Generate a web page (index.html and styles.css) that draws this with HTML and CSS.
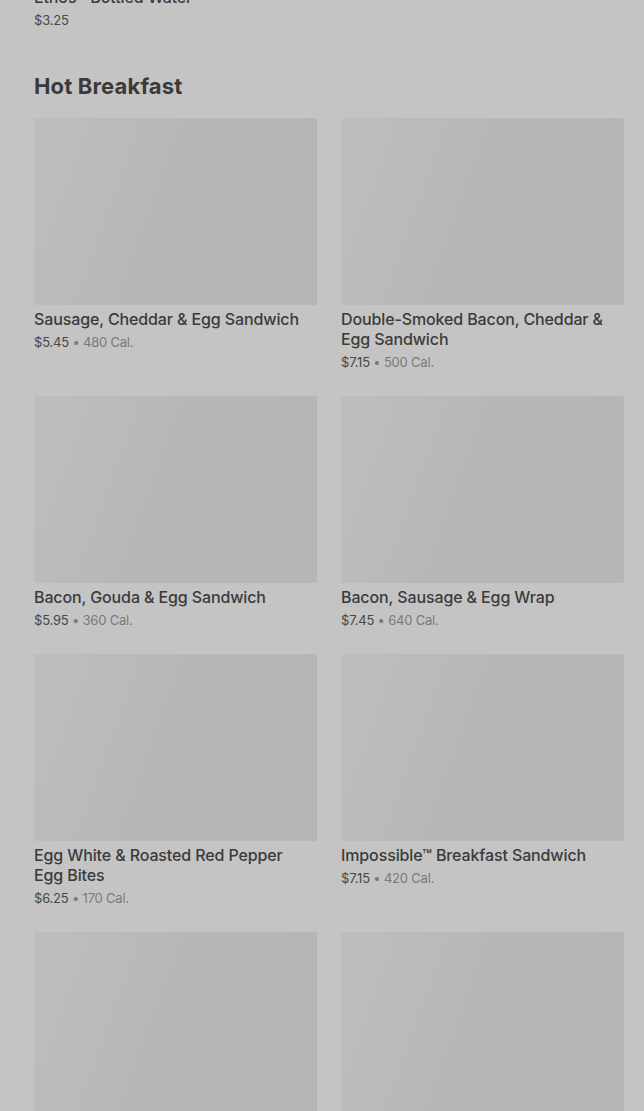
FILE: index.html
```html
<!DOCTYPE html>
<html lang="en">
<head>
<meta charset="utf-8">
<title>Menu</title>
<link rel="stylesheet" href="styles.css">
</head>
<body>
<main class="page">
  <div class="prev-item">
    <div class="item-name">Ethos™ Bottled Water</div>
    <div class="item-meta"><span class="price">$3.25</span></div>
  </div>

  <section class="category">
    <h2 class="category-title">Hot Breakfast</h2>
    <div class="grid">
      <article class="card">
        <div class="thumb"></div>
        <div class="item-name">Sausage, Cheddar &amp; Egg Sandwich</div>
        <div class="item-meta"><span class="price">$5.45</span><span class="cal"> • 480 Cal.</span></div>
      </article>
      <article class="card">
        <div class="thumb"></div>
        <div class="item-name">Double-Smoked Bacon, Cheddar &amp; Egg Sandwich</div>
        <div class="item-meta"><span class="price">$7.15</span><span class="cal"> • 500 Cal.</span></div>
      </article>
      <article class="card">
        <div class="thumb"></div>
        <div class="item-name">Bacon, Gouda &amp; Egg Sandwich</div>
        <div class="item-meta"><span class="price">$5.95</span><span class="cal"> • 360 Cal.</span></div>
      </article>
      <article class="card">
        <div class="thumb"></div>
        <div class="item-name">Bacon, Sausage &amp; Egg Wrap</div>
        <div class="item-meta"><span class="price">$7.45</span><span class="cal"> • 640 Cal.</span></div>
      </article>
      <article class="card">
        <div class="thumb"></div>
        <div class="item-name">Egg White &amp; Roasted Red Pepper Egg Bites</div>
        <div class="item-meta"><span class="price">$6.25</span><span class="cal"> • 170 Cal.</span></div>
      </article>
      <article class="card">
        <div class="thumb"></div>
        <div class="item-name">Impossible™ Breakfast Sandwich</div>
        <div class="item-meta"><span class="price">$7.15</span><span class="cal"> • 420 Cal.</span></div>
      </article>
      <article class="card">
        <div class="thumb tall"></div>
      </article>
      <article class="card">
        <div class="thumb tall"></div>
      </article>
    </div>
  </section>
</main>
</body>
</html>
```

FILE: styles.css
```css
html, body {
  margin: 0;
  padding: 0;
  background: #c4c4c4;
}

body {
  font-family: Inter, "Noto Sans", sans-serif;
  color: #3b3b3b;
  height: 1111px;
  overflow: hidden;
}

.page {
  margin-top: -13px;
  padding: 0 20px 0 34px;
}

.prev-item {
  margin-bottom: 42px;
}

.category-title {
  margin: 0 0 18px;
  font-size: 22px;
  line-height: 28px;
  font-weight: 700;
  color: #3a3a3a;
  letter-spacing: 0.15px;
}

.grid {
  display: grid;
  grid-template-columns: 283px 283px;
  column-gap: 24px;
  row-gap: 24px;
  align-items: start;
}

.thumb {
  height: 187px;
  border-radius: 2px;
  background: linear-gradient(110deg, #bdbdbd 0%, #bbbbbb 22%, #b7b7b7 42%, #b6b6b6 100%);
  margin-bottom: 4px;
}

.thumb.tall {
  margin-bottom: 0;
}

.item-name {
  font-size: 16px;
  line-height: 20px;
  font-weight: 500;
  color: #3b3b3b;
  letter-spacing: -0.12px;
  padding-right: 8px;
}

.item-meta {
  margin-top: 3px;
  font-size: 13px;
  line-height: 20px;
  letter-spacing: -0.2px;
}

.price {
  color: #474747;
}

.cal {
  color: #7a7a7a;
}
```
